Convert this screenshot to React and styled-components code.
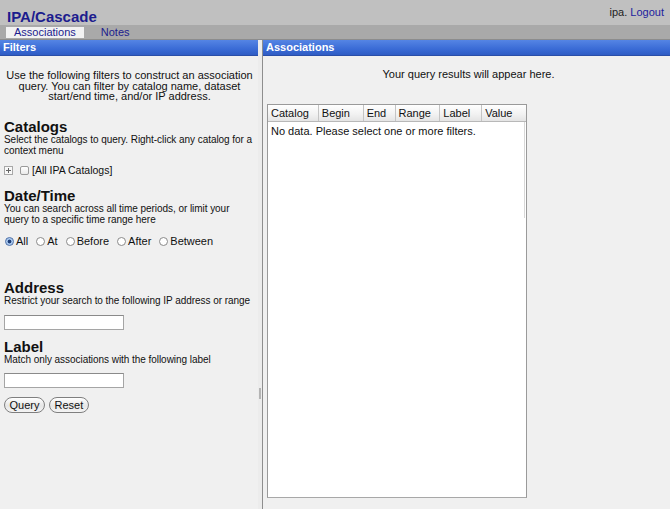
import React from 'react';
import styled, { createGlobalStyle } from 'styled-components';

const GlobalStyle = createGlobalStyle`
  html, body {
    margin: 0;
    padding: 0;
    background: #f0f0f0;
    font-family: 'Liberation Sans', Arial, sans-serif;
    color: #111;
  }
  * { box-sizing: border-box; }
`;

const columns = [
  { name: 'Catalog', width: 51 },
  { name: 'Begin', width: 45 },
  { name: 'End', width: 32 },
  { name: 'Range', width: 45 },
  { name: 'Label', width: 42 },
  { name: 'Value', width: 44 },
];

const ranges = ['All', 'At', 'Before', 'After', 'Between'];

export default function App() {
  return (
    <>
      <GlobalStyle />
      <Page>
        <TopBar>
          <Title>IPA/Cascade</Title>
          <UserBox>
            ipa. <UserLink href="#">Logout</UserLink>
          </UserBox>
        </TopBar>
        <TabBar>
          <Tab $active>Associations</Tab>
          <Tab>Notes</Tab>
        </TabBar>

        <Main>
          <FilterPanel>
            <PanelHeader>Filters</PanelHeader>
            <FilterBody>
              <Intro>
                Use the following filters to construct an association query. You can filter by
                catalog name, dataset start/end time, and/or IP address.
              </Intro>

              <Section $space={17}>
                <Heading>Catalogs</Heading>
                <Hint>Select the catalogs to query. Right-click any catalog for a context menu</Hint>
                <TreeRow>
                  <Expander>
                    <svg width="9" height="9" viewBox="0 0 9 9">
                      <path d="M2 4.5h5M4.5 2v5" stroke="#666" strokeWidth="1" />
                    </svg>
                  </Expander>
                  <Check type="checkbox" />
                  <span>[All IPA Catalogs]</span>
                </TreeRow>
              </Section>

              <Section $space={12}>
                <Heading>Date/Time</Heading>
                <Hint>You can search across all time periods, or limit your query to a specific time range here</Hint>
                <RadioRow>
                  {ranges.map((r) => (
                    <RadioLabel key={r}>
                      <Radio type="radio" name="range" defaultChecked={r === 'All'} />
                      {r}
                    </RadioLabel>
                  ))}
                </RadioRow>
              </Section>

              <Section $space={33}>
                <Heading>Address</Heading>
                <Hint>Restrict your search to the following IP address or range</Hint>
                <TextInput type="text" />
              </Section>

              <Section $space={9}>
                <Heading>Label</Heading>
                <Hint>Match only associations with the following label</Hint>
                <TextInput type="text" />
              </Section>

              <ButtonRow>
                <PillButton type="button">Query</PillButton>
                <PillButton type="button">Reset</PillButton>
              </ButtonRow>
            </FilterBody>
          </FilterPanel>

          <Splitter>
            <SplitHandle />
          </Splitter>

          <ResultsPanel>
            <PanelHeader>Associations</PanelHeader>
            <ResultsBody>
              <Notice>Your query results will appear here.</Notice>
              <Grid>
                <GridHead>
                  {columns.map((c) => (
                    <HeadCell key={c.name} style={{ width: c.width }}>
                      {c.name}
                    </HeadCell>
                  ))}
                </GridHead>
                <GridBody>
                  <EmptyText>No data. Please select one or more filters.</EmptyText>
                  <ScrollEdge />
                </GridBody>
              </Grid>
            </ResultsBody>
          </ResultsPanel>
        </Main>
      </Page>
    </>
  );
}

const Page = styled.div`
  width: 670px;
  height: 509px;
  display: flex;
  flex-direction: column;
  overflow: hidden;
`;

const TopBar = styled.div`
  height: 25px;
  background: #c0c0c0;
  display: flex;
  align-items: flex-start;
  justify-content: space-between;
  padding: 0 6px 0 7px;
`;

const Title = styled.h1`
  margin: 9px 0 0;
  font-size: 15px;
  line-height: 16px;
  font-weight: bold;
  color: #1c1c8e;
`;

const UserBox = styled.div`
  margin-top: 5px;
  font-size: 11px;
  line-height: 14px;
  color: #222;
`;

const UserLink = styled.a`
  color: #1c1c9e;
  text-decoration: none;
`;

const TabBar = styled.div`
  height: 15px;
  background: #a9a9a9;
  border-bottom: 1px solid #8c8c8c;
  display: flex;
  align-items: flex-start;
  gap: 9px;
  padding: 2px 0 0 6px;
`;

const Tab = styled.div`
  height: 11px;
  padding: 0 8px;
  font-size: 11px;
  line-height: 11px;
  color: #1c1c8e;
  background: ${(p) => (p.$active ? '#f2f2f2' : 'transparent')};
`;

const Main = styled.div`
  flex: 1;
  display: flex;
  min-height: 0;
`;

const FilterPanel = styled.div`
  width: 258px;
  display: flex;
  flex-direction: column;
`;

const ResultsPanel = styled.div`
  flex: 1;
  display: flex;
  flex-direction: column;
  border-left: 1px solid #8e8e8e;
`;

const PanelHeader = styled.div`
  height: 16px;
  background: linear-gradient(#5585e4, #3a6bd6 60%, #2f5cc4);
  border-bottom: 1px solid #2a4ea8;
  color: #fff;
  font-size: 11px;
  font-weight: bold;
  line-height: 15px;
  padding-left: 3px;
`;

const Splitter = styled.div`
  width: 4px;
  background: #ececec;
  padding-top: 348px;
  display: flex;
  justify-content: center;
`;

const SplitHandle = styled.div`
  width: 2px;
  height: 11px;
  background: #b4b4b4;
`;

const FilterBody = styled.div`
  flex: 1;
  padding: 14px 3px 0 4px;
`;

const Intro = styled.p`
  margin: 0;
  text-align: center;
  font-size: 11px;
  line-height: 10.7px;
`;

const Section = styled.section`
  margin-top: ${(p) => p.$space}px;
`;

const Heading = styled.h2`
  margin: 0;
  font-size: 15px;
  line-height: 16px;
  font-weight: bold;
`;

const Hint = styled.p`
  margin: 0;
  font-size: 10px;
  line-height: 10.5px;
  letter-spacing: -0.05px;
`;

const TreeRow = styled.div`
  margin-top: 8px;
  display: flex;
  align-items: center;
  height: 12px;
  font-size: 10.5px;
`;

const Expander = styled.span`
  width: 9px;
  height: 9px;
  border: 1px solid #a8a8a8;
  background: #f8f8f8;
  display: flex;
  margin-right: 7px;
  svg { margin: -1px; }
`;

const Check = styled.input`
  appearance: none;
  margin: 0 3px 0 0;
  width: 9px;
  height: 9px;
  border: 1px solid #9a9a9a;
  border-radius: 2px;
  background: linear-gradient(#fff, #eaeaea);
`;

const RadioRow = styled.div`
  margin-top: 10px;
  display: flex;
  gap: 8px;
  padding-left: 1px;
  height: 12px;
  align-items: center;
`;

const RadioLabel = styled.label`
  display: flex;
  align-items: center;
  gap: 2px;
  font-size: 11px;
`;

const Radio = styled.input`
  appearance: none;
  margin: 0;
  width: 9px;
  height: 9px;
  border-radius: 50%;
  border: 1px solid #8a8a8a;
  background: #fff;
  &:checked {
    border-color: #4a6ea8;
    background: radial-gradient(circle, #1e3e78 0 1.6px, #9ec0ea 2.2px, #cfe0f6 100%);
  }
`;

const TextInput = styled.input`
  display: block;
  margin: 8px 0 0;
  width: 120px;
  height: 15px;
  border: 1px solid #a5a5a5;
  border-top-color: #8a8a8a;
  background: #fff;
  padding: 0 2px;
`;

const ButtonRow = styled.div`
  margin-top: 9px;
  display: flex;
  gap: 4px;
`;

const PillButton = styled.button`
  height: 16px;
  padding: 0 4.5px;
  border: 1px solid #7f7f7f;
  border-radius: 8px;
  background: linear-gradient(#ffffff, #e6e6e6 55%, #f4f4f4);
  font-family: 'Liberation Sans', Arial, sans-serif;
  font-size: 11px;
  line-height: 13px;
  color: #111;
`;

const ResultsBody = styled.div`
  flex: 1;
  display: flex;
  flex-direction: column;
  padding: 12px 0 11px 4px;
`;

const Notice = styled.p`
  margin: 0;
  text-align: center;
  font-size: 11px;
  line-height: 13px;
`;

const Grid = styled.div`
  margin-top: 23px;
  width: 260px;
  flex: 1;
  border: 1px solid #9a9a9a;
  border-bottom-color: #a8a8a8;
  background: #fff;
  display: flex;
  flex-direction: column;
`;

const GridHead = styled.div`
  display: flex;
  height: 17px;
  background: linear-gradient(#ffffff, #f1f1f1 60%, #e4e4e4);
  border-bottom: 1px solid #b8b8b8;
`;

const HeadCell = styled.div`
  padding-left: 3px;
  font-size: 11px;
  line-height: 17px;
  border-right: 1px solid #c4c4c4;
  &:last-child { border-right: none; }
`;

const GridBody = styled.div`
  position: relative;
  flex: 1;
  padding: 3px 0 0 3px;
`;

const EmptyText = styled.div`
  font-size: 11px;
  line-height: 13px;
`;

const ScrollEdge = styled.div`
  position: absolute;
  right: 1px;
  top: 0;
  width: 1px;
  height: 96px;
  background: #d8d8d8;
`;
